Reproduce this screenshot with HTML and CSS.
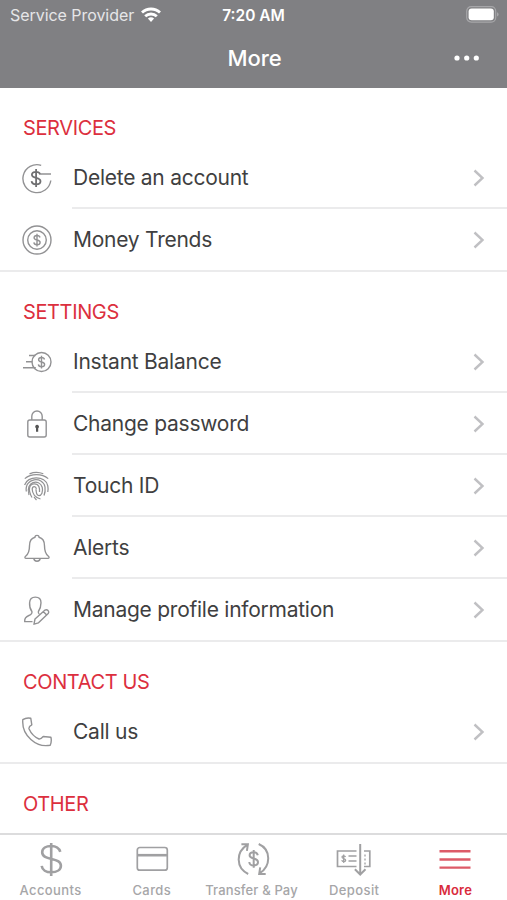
FILE: index.html
```html
<!DOCTYPE html>
<html lang="en">

<head>
    <meta charset="utf-8">
    <title>More</title>
    <link rel="stylesheet" href="styles.css">
</head>

<body>
    <div class="screen">
        <header class="header">
            <div class="status-bar">
                <div class="carrier">
                    <span class="carrier-name">Service Provider</span>
                    <svg class="wifi" width="20" height="15" viewBox="0 0 20 15" fill="none" stroke="#fff" stroke-width="2.8">
                        <path d="M1 5.6a13 13 0 0 1 18 0"/>
                        <path d="M4.2 9.3a8.4 8.4 0 0 1 11.600 0"/>
                        <path d="M6.9 11.6a4.5 4.5 0 0 1 6.2 0L10 15z" fill="#fff" stroke="none"/>
                    </svg>
                </div>
                <span class="time">7:20 AM</span>
                <svg class="battery" width="33" height="17" viewBox="0 0 33 17">
                    <rect x=".7" y=".7" width="29" height="15.4" rx="4.5" fill="none" stroke="#a6a6a9" stroke-width="1.2"/>
                    <rect x="2.6" y="2.6" width="25.2" height="11.6" rx="3" fill="#fff"/>
                    <path d="M31 6.3q1.6.6 1.6 2.1t-1.6 2.1z" fill="#a6a6a9"/>
                </svg>
            </div>
            <div class="title-bar">
                <h1 class="title">More</h1>
                <svg class="menu-dots" width="26" height="6" viewBox="0 0 26 6" fill="#fff">
                    <circle cx="3" cy="3" r="2.6"/>
                    <circle cx="12.7" cy="3" r="2.6"/>
                    <circle cx="22.3" cy="3" r="2.6"/>
                </svg>
            </div>
        </header>

        <main class="content">
            <section class="section">
                <h2 class="heading">Services</h2>
                <ul class="list">
                    <li class="row">
                        <svg class="icon" viewBox="0 0 32 32">
                            <path d="M20.2 3.3A14 14 0 1 0 29.8 18.500M20 12h10"/>
                            <path class="bold" d="M19.3 12.6c-.4-2-2.2-2.8-4.2-2.8-2.3 0-4.2 1-4.2 2.9 0 4.2 8.6 2.2 8.6 6.5 0 2-1.9 3.1-4.4 3.1-2.3 0-4.3-1.1-4.5-3.2M15.1 7v18"/>
                        </svg>
                        <span class="label">Delete an account</span>
                        <svg class="chevron" viewBox="0 0 12 18"><path d="M1.5 1.5 9.5 9l-8 7.5"/></svg>
                    </li>
                    <li class="row">
                        <svg class="icon" viewBox="0 0 32 32">
                            <circle cx="16" cy="16" r="14"/>
                            <circle cx="16" cy="16" r="9.3"/>
                            <path d="M19 13.5c-.3-1.500-1.500-2-3-2s-2.900.7-2.900 2.200c0 3 6 1.600 6 4.700 0 1.500-1.400 2.300-3.100 2.300s-3-.8-3.100-2.300M16 9.700v12.700"/>
                        </svg>
                        <span class="label">Money Trends</span>
                        <svg class="chevron" viewBox="0 0 12 18"><path d="M1.5 1.5 9.5 9l-8 7.5"/></svg>
                    </li>
                </ul>
            </section>

            <section class="section">
                <h2 class="heading">Settings</h2>
                <ul class="list">
                    <li class="row">
                        <svg class="icon" viewBox="0 0 32 32">
                            <circle cx="20.5" cy="16" r="9.5"/>
                            <path d="M14.5 9.5H8M11.5 15.8H5M14.8 21.8H2"/>
                            <path d="M23.5 13.5c-.3-1.500-1.500-2-3-2s-2.900.7-2.900 2.200c0 3 6 1.600 6 4.700 0 1.500-1.400 2.300-3.100 2.300s-3-.8-3.100-2.300M20.500 9.700v12.700"/>
                        </svg>
                        <span class="label">Instant Balance</span>
                        <svg class="chevron" viewBox="0 0 12 18"><path d="M1.5 1.5 9.5 9l-8 7.5"/></svg>
                    </li>
                    <li class="row">
                        <svg class="icon" viewBox="0 0 32 32">
                            <rect x="6.800" y="12" width="18.400" height="17" rx="2"/>
                            <path d="M10.800 12V8.200a5.200 5.200 0 0 1 10.400 0V12"/>
                            <path class="solid" d="M14.200 18.600a1.900 1.900 0 1 1 3 1.600v3.600h-2.200v-3.600a2 2 0 0 1-.8-1.600z"/>
                        </svg>
                        <span class="label">Change password</span>
                        <svg class="chevron" viewBox="0 0 12 18"><path d="M1.5 1.5 9.5 9l-8 7.5"/></svg>
                    </li>
                    <li class="row">
                        <svg class="icon icon-touch" viewBox="0 0 32 32">
                            <path d="M8.5 3.8Q15.5.9 22.3 3.8"/>
                            <path d="M3.8 8.6C10 3.2 21 3.2 27.2 8.6"/>
                            <path d="M3.6 15C6.2 5.6 24.5 5.2 26.8 15.800q.6 3.200 0 6.200"/>
                            <path d="M5.3 21.5C3.2 7.8 21.8 5.8 24 17q.6 4.500-1 8.500"/>
                            <path d="M8 25C3.8 11.5 18.5 8.2 21.2 17.200c1.200 4.800-.8 8.300-3.200 8.300-3.600 0-2.200-4-3.200-6.200"/>
                            <path d="M11 27.500C6.500 19.500 8.300 14.200 13 13.800c5.300-.3 5.800 5 5.500 8.200"/>
                            <path d="M19.500 29c-5.500-1.500-8.300-5.800-8.300-10 .2-3 3.700-3 4.200-.2"/>
                            <path d="M13 26.800q1 1.800 2.500 3.200"/>
                        </svg>
                        <span class="label">Touch ID</span>
                        <svg class="chevron" viewBox="0 0 12 18"><path d="M1.5 1.5 9.5 9l-8 7.5"/></svg>
                    </li>
                    <li class="row">
                        <svg class="icon" viewBox="0 0 32 32">
                            <path d="M14 5.300c-.2-2.600 4.200-2.600 4 0 4 1 5.500 4.200 5.500 8.500 0 6.200 1.200 8.500 3.900 10.500 1.100.9.800 2.100-.5 2.100H5.100c-1.300 0-1.600-1.200-.5-2.100 2.700-2 3.900-4.300 3.900-10.500 0-4.300 1.500-7.500 5.500-8.500z"/>
                            <path d="M12.800 26.400c.3 3.700 6.100 3.700 6.400 0"/>
                        </svg>
                        <span class="label">Alerts</span>
                        <svg class="chevron" viewBox="0 0 12 18"><path d="M1.5 1.5 9.5 9l-8 7.5"/></svg>
                    </li>
                    <li class="row">
                        <svg class="icon" viewBox="0 0 32 32">
                            <path d="M11.500 27.600H3.700c-.3-3.500 1.300-5 4.200-6.100 2.700-1 3.500-1.800 3-4-2.200-3-2.500-6-2.300-8.800.2-3.600 2.300-5.600 5.700-5.600s5.700 2 5.700 5.600c0 3.200-.7 6-2.600 8.800-.4 1.500-.1 2.300 1.200 3"/>
                            <path d="m14 25 9.800-8.800c2.500-1.600 5 1.200 3.400 3.400l-9.700 9.200-4.500 1.400zM22.200 17.600l3.500 3.500"/>
                        </svg>
                        <span class="label">Manage profile information</span>
                        <svg class="chevron" viewBox="0 0 12 18"><path d="M1.5 1.5 9.5 9l-8 7.5"/></svg>
                    </li>
                </ul>
            </section>

            <section class="section">
                <h2 class="heading">Contact us</h2>
                <ul class="list">
                    <li class="row">
                        <svg class="icon" viewBox="0 0 32 32">
                            <path d="M1.800 3.700C4 2.200 7 1.800 9.800 2.300L10.800 8.800c-2.200 1.200-3.200 2.700-2.700 4.200 2 4.500 5.300 8 9.900 10 1.700.4 2.900-1 4.200-2.500l7.700.7c.7 2.700.5 5.200-.7 8C15.500 32 .5 19.500 1.800 3.700z"/>
                        </svg>
                        <span class="label">Call us</span>
                        <svg class="chevron" viewBox="0 0 12 18"><path d="M1.5 1.5 9.5 9l-8 7.5"/></svg>
                    </li>
                </ul>
            </section>

            <section class="section">
                <h2 class="heading">Other</h2>
            </section>
        </main>

        <nav class="tabs">
            <a class="tab">
                <svg class="tab-icon" viewBox="0 0 40 36">
                    <path class="thick" d="M29.300 10.800C28 6.800 24.300 5 20.200 5c-5 0-9 2.300-9 6.300 0 9 18.700 4.500 18.700 13.400 0 4-4 6.600-9.700 6.600-5 0-9-2.300-9.500-6.500M20.200 2v33"/>
                </svg>
                <span class="tab-label">Accounts</span>
            </a>
            <a class="tab">
                <svg class="tab-icon" viewBox="0 0 40 36">
                    <rect x="5.300" y="6.500" width="30" height="22.700" rx="2.500"/>
                    <path class="thick" d="M5.300 14.200h30"/>
                </svg>
                <span class="tab-label">Cards</span>
            </a>
            <a class="tab">
                <svg class="tab-icon" viewBox="0 0 40 36">
                    <path class="arrows" d="M15.200 33C2.700 27 2.700 11 14.200 3.800M8.400 3.300l6.500-.1-1 6.700M25.700 3C38.200 8.500 38.200 25 26.700 32.200M32.700 32.900l-6.500.1 1-6.700"/>
                    <path class="arrows" d="M24.800 14.200c-.5-2.200-2.200-3-4.100-3-2.300 0-4.100 1.100-4.100 3 0 4.500 8.400 2.200 8.400 6.900 0 2.200-1.900 3.400-4.300 3.400s-4.200-1.200-4.400-3.500M20.700 9v17.700"/>
                </svg>
                <span class="tab-label tab-transfer">Transfer &amp; Pay</span>
            </a>
            <a class="tab">
                <svg class="tab-icon" viewBox="0 0 40 36">
                    <path d="M22.500 10H3.500v15.500h19M30 10h5.800v15.500H30M14.500 15h8M14.500 20h8"/>
                    <path class="arrows" d="M26.200 3v30.500M20.900 28.200l5.300 5.300 5.300-5.300"/>
                    <path class="thin" d="M11.500 16c-.5-1.700-3.500-1.500-3.500 0 0 2 3.700 1 3.700 3.200 0 1.700-3.500 1.900-3.900 0M9.700 13.500v8.600"/>
                    <path class="thin dots" d="M31 13.500v10"/>
                </svg>
                <span class="tab-label">Deposit</span>
            </a>
            <a class="tab tab-active">
                <svg class="tab-icon" viewBox="0 0 40 36">
                    <path d="M4.500 10.200h31M4.500 18.500h31M4.500 26.600h31"/>
                </svg>
                <span class="tab-label">More</span>
            </a>
        </nav>
    </div>
</body>

</html>
```
FILE: styles.css
```css
* {
  box-sizing: border-box;
}

body {
  margin: 0;
  background: #fff;
  font-family: Inter, "Liberation Sans", sans-serif;
  color: #3f3f41;
}

.screen {
  display: flex;
  flex-direction: column;
  height: 900px;
  overflow: hidden;
}

/* header */
.header {
  flex: none;
  height: 88px;
  background: #808083;
  color: #fff;
}

.status-bar {
  display: grid;
  grid-template-columns: 1fr auto 1fr;
  align-items: center;
  height: 29px;
  padding: 0 8px 0 10px;
}

.carrier {
  display: flex;
  align-items: center;
  gap: 7px;
}

.carrier-name {
  font-size: 16px;
  letter-spacing: -.05px;
  color: #e6e6e8;
}

.time {
  margin: 2px 0 0 -2px;
  font-size: 15.5px;
  font-weight: 600;
}

.battery {
  justify-self: end;
}

.title-bar {
  display: grid;
  grid-template-columns: 1fr auto 1fr;
  align-items: center;
  height: 57px;
  padding: 0 27px;
}

.title {
  grid-column: 2;
  margin: 0;
  padding-left: 2px;
  font-size: 22px;
  font-weight: 500;
  letter-spacing: -.1px;
}

.menu-dots {
  justify-self: end;
}

/* list of options */
.content {
  flex: 1;
  overflow: hidden;
}

.heading {
  height: 59px;
  margin: 0;
  padding: 28px 23px 0;
  font-size: 20px;
  line-height: 24px;
  font-weight: 400;
  letter-spacing: -.38px;
  text-transform: uppercase;
  color: #dc2f3e;
}

.list {
  margin: 0;
  padding: 0;
  list-style: none;
}

.row {
  display: grid;
  grid-template-columns: 73px 1fr 35px;
  align-items: center;
  height: 62px;
  padding-bottom: 1px;
  background: linear-gradient(#ebebec, #ebebec) 72px 100% / 100% 2px no-repeat;
}

/* the last divider runs the full width */
.row:last-child {
  height: 63px;
  padding-bottom: 2px;
  background-position: 0 100%;
}

.icon {
  width: 32px;
  height: 32px;
  margin-left: 21px;
  fill: none;
  stroke: #929294;
  stroke-width: 1.4;
  stroke-linejoin: round;
}

.icon-touch {
  stroke-width: 1.25;
}

.icon .bold {
  stroke: #707072;
  stroke-width: 1.8;
}

.icon .solid {
  fill: #555;
  stroke: none;
}

.label {
  font-size: 21px;
  letter-spacing: -.25px;
  white-space: nowrap;
}

.chevron {
  width: 12px;
  height: 18px;
  margin-left: 1px;
  fill: none;
  stroke: #c0c0c3;
  stroke-width: 2.4;
}

/* bottom tabs */
.tabs {
  display: grid;
  grid-template-columns: repeat(5, 1fr);
  flex: none;
  height: 67px;
  padding-right: 1px;
  border-top: 2px solid #dcdcdd;
  background: #fff;
}

.tab {
  display: flex;
  flex-direction: column;
  align-items: center;
  padding-top: 6px;
  color: #a6a6a8;
}

.tab-icon {
  width: 40px;
  height: 36px;
  fill: none;
  stroke: #a0a0a2;
  stroke-width: 1.7;
}

.tab-icon .thick {
  stroke-width: 2.6;
}

.tab-icon .arrows {
  stroke-width: 2;
}

.tab-icon .thin {
  stroke-width: 1.3;
}

.tab-icon .dots {
  stroke-dasharray: 2 2;
}

.tab-label {
  margin-top: 5px;
  font-size: 13px;
  line-height: 16px;
  font-weight: 500;
  letter-spacing: .4px;
  white-space: nowrap;
}

.tab-transfer {
  margin-left: -3px;
  letter-spacing: .15px;
}

.tab-active {
  color: #d92b3c;
}

.tab-active .tab-icon {
  stroke: #dd5b68;
  stroke-width: 2.4;
}

.tab-active .tab-label {
  font-weight: 600;
  letter-spacing: .2px;
}
```
